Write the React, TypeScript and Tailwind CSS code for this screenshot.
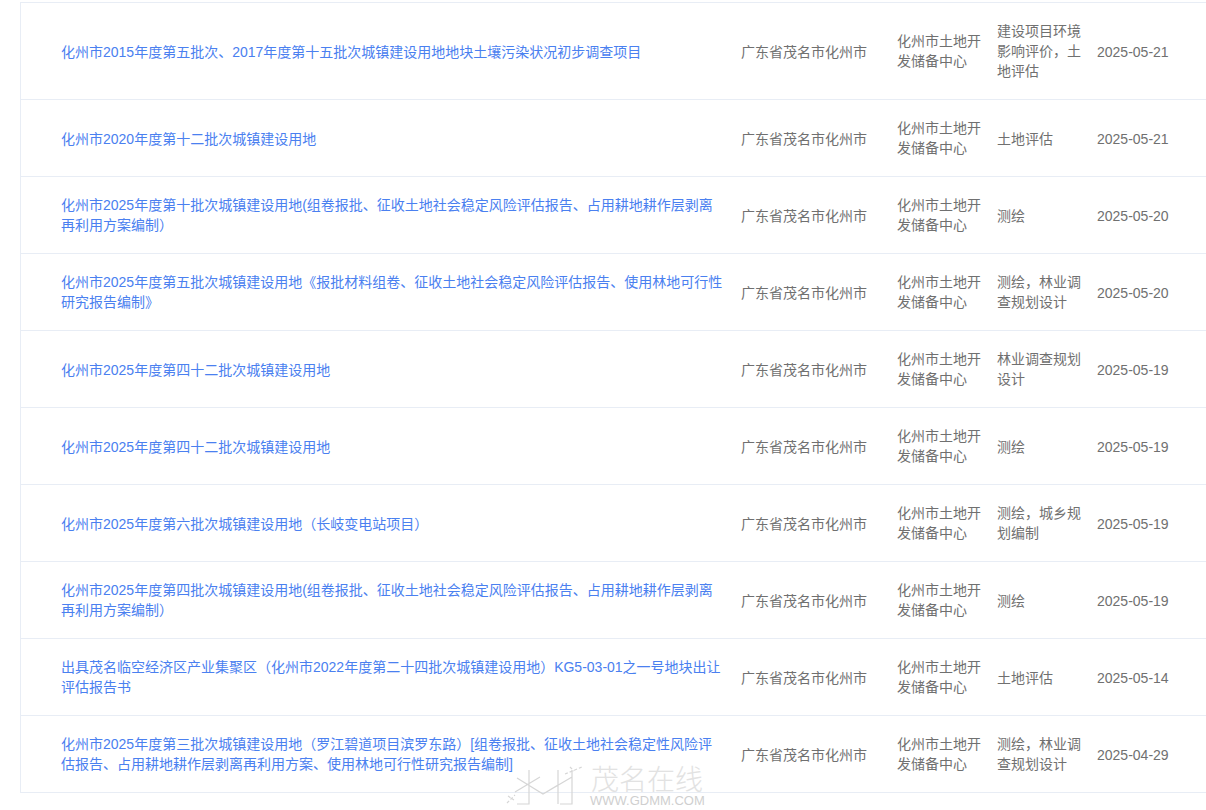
const rows: [string, string, string][] = [
  ["化州市2015年度第五批次、2017年度第十五批次城镇建设用地地块土壤污染状况初步调查项目", "建设项目环境影响评价，土地评估", "2025-05-21"],
  ["化州市2020年度第十二批次城镇建设用地", "土地评估", "2025-05-21"],
  ["化州市2025年度第十批次城镇建设用地(组卷报批、征收土地社会稳定风险评估报告、占用耕地耕作层剥离再利用方案编制）", "测绘", "2025-05-20"],
  ["化州市2025年度第五批次城镇建设用地《报批材料组卷、征收土地社会稳定风险评估报告、使用林地可行性研究报告编制》", "测绘，林业调查规划设计", "2025-05-20"],
  ["化州市2025年度第四十二批次城镇建设用地", "林业调查规划设计", "2025-05-19"],
  ["化州市2025年度第四十二批次城镇建设用地", "测绘", "2025-05-19"],
  ["化州市2025年度第六批次城镇建设用地（长岐变电站项目）", "测绘，城乡规划编制", "2025-05-19"],
  ["化州市2025年度第四批次城镇建设用地(组卷报批、征收土地社会稳定风险评估报告、占用耕地耕作层剥离再利用方案编制）", "测绘", "2025-05-19"],
  ["出具茂名临空经济区产业集聚区（化州市2022年度第二十四批次城镇建设用地）KG5-03-01之一号地块出让评估报告书", "土地评估", "2025-05-14"],
  ["化州市2025年度第三批次城镇建设用地（罗江碧道项目滨罗东路）[组卷报批、征收土地社会稳定性风险评估报告、占用耕地耕作层剥离再利用方案、使用林地可行性研究报告编制]", "测绘，林业调查规划设计", "2025-04-29"],
];

export default function App() {
  return (
    <div className="relative h-[810px] w-[1206px] overflow-hidden bg-white pt-0.5 pl-5 text-sm leading-5 text-[#707070] font-['Liberation_Sans','Noto_Sans_CJK_SC',sans-serif]">
      <div className="w-[1240px] border-t border-l border-[#e8edf5]">
        {rows.map(([title, type, date]) => (
          <div key={title + date} className="grid grid-cols-[710px_156px_100px_100px_174px] items-center border-b border-[#e8edf5] py-[18px]">
            <div className={title.length < 50 ? "pt-0.5 pr-1.5 pl-10 text-[#4a80f0]" : "pr-1.5 pl-10 text-[#4a80f0]"}>{title}</div>
            <div className="px-2.5 pt-0.5">广东省茂名市化州市</div>
            <div className="pr-1 pl-2.5">化州市土地开发储备中心</div>
            <div className={type.length <= 6 ? "pt-0.5 pr-1 pl-2.5" : "pr-1 pl-2.5"}>{type}</div>
            <div className="px-2.5 pt-0.5">{date}</div>
          </div>
        ))}
      </div>
      <div className="absolute top-[762px] left-[500px] h-[48px] w-[210px]">
        <svg width="90" height="48" viewBox="0 0 90 48" fill="none" stroke="#d6d6d6" strokeWidth="1.2" className="absolute top-0 left-0">
          <path d="M29 8 V42 H17 M58 8 V42 M72 8 V42 H60 M17 16 L43 32 L72 15 M15 30 L40 15 M43 32 L58 23" />
          <path d="M7 41 L15 33 M8 34 L14 38 M65 12 L82 5 M70 5 L74 9" strokeDasharray="3 2" />
        </svg>
        <span className="absolute top-[5px] left-[90px] w-[114px] text-center text-[28px] leading-[28px] font-light text-[#e2e2e2]">茂名在线</span>
        <span className="absolute top-[33px] left-[90px] w-[114px] text-center text-[13px] leading-[12px] text-[#cfcfcf]">WWW.GDMM.COM</span>
      </div>
    </div>
  );
}
